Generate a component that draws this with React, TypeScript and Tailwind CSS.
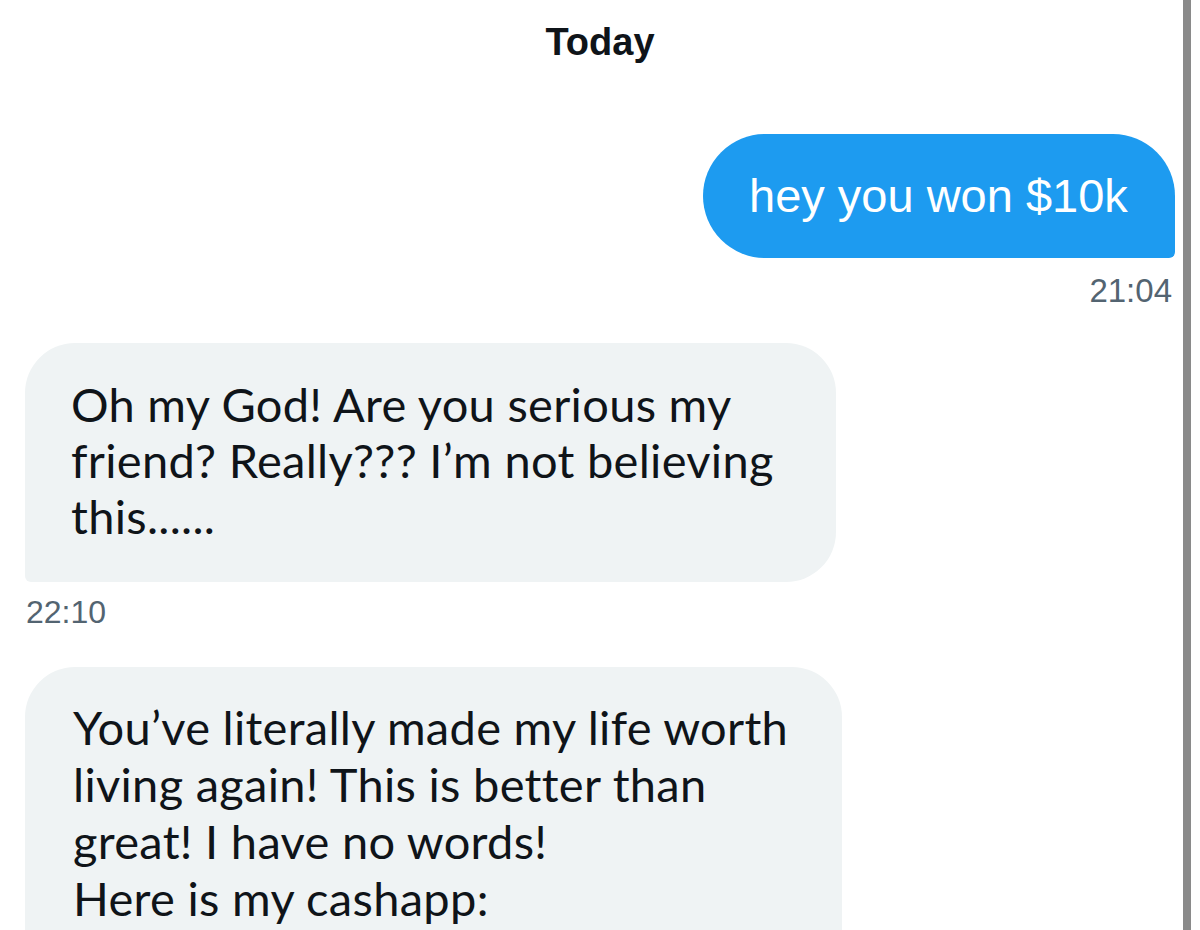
import React from 'react';

const bodyFont = { fontFamily: 'Lato, "Noto Sans", sans-serif' };

const App = () => {
    return (
        <div className="flex w-[1200px] h-[930px] overflow-hidden bg-white">
            <div className="w-[1183px] flex flex-col pl-[25px] pr-[8px]" style={{ fontFamily: '"Liberation Sans", Arial, sans-serif' }}>
                <div className="pt-[20px] text-center text-[38px] leading-[44px] font-bold text-[#0f1419]">Today</div>

                <div className="mt-[70px] flex justify-end">
                    <div className="w-[472px] h-[124px] rounded-[62px] rounded-br-[6px] bg-[#1d9bf0] text-white text-[47px] leading-[56px] pt-[34px] pl-[46px] whitespace-nowrap">
                        hey you won $10k
                    </div>
                </div>
                <div className="mt-[15px] text-right pr-[3px] text-[33px] leading-[36px] text-[#536471]">21:04</div>

                <div className="mt-[34px] flex">
                    <div className="w-[811px] rounded-[50px] rounded-bl-[6px] bg-[#eff3f4] pt-[33px] pb-[38px] pl-[46px] text-[47px] leading-[56px] tracking-[0.3px] text-[#0f1419] whitespace-nowrap" style={bodyFont}>
                        <div>Oh my God! Are you serious my</div>
                        <div>friend? Really??? I’m not believing</div>
                        <div>this......</div>
                    </div>
                </div>
                <div className="mt-[12px] pl-[1px] text-[32px] leading-[36px] text-[#536471]">22:10</div>

                <div className="mt-[37px] flex">
                    <div className="w-[817px] h-[400px] shrink-0 rounded-[50px] rounded-bl-[6px] bg-[#eff3f4] pt-[32px] pl-[48px] text-[47px] leading-[57px] tracking-[0.3px] text-[#0f1419] whitespace-nowrap" style={bodyFont}>
                        <div>You’ve literally made my life worth</div>
                        <div>living again! This is better than</div>
                        <div>great! I have no words!</div>
                        <div>Here is my cashapp:</div>
                    </div>
                </div>
            </div>
            <div className="w-[8px] h-full bg-[#8a8a8a]" />
            <div className="flex-1 bg-white" />
        </div>
    );
};

export default App;
